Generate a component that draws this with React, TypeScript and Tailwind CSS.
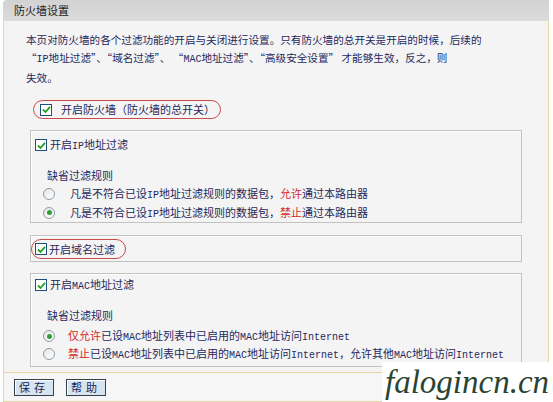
import React from 'react'

const cjk = "font-['Noto_Sans_CJK_SC',sans-serif]"

function Mono({ children }: { children: React.ReactNode }) {
  return <span className="font-['Liberation_Mono',monospace] text-[10px]">{children}</span>
}

function CheckBox() {
  return (
    <span className="flex h-[12px] w-[12px] shrink-0 items-center justify-center border border-[#1f4f7a] bg-white">
      <svg width="9" height="9" viewBox="0 0 9 9">
        <path d="M1 4.5 L3.5 7 L8 1.8" fill="none" stroke="#21a121" strokeWidth="1.8" />
      </svg>
    </span>
  )
}

function Radio({ checked }: { checked?: boolean }) {
  return (
    <span className="flex h-[12px] w-[12px] shrink-0 items-center justify-center rounded-full border border-[#8c9cab] bg-gradient-to-br from-[#e6e6e6] to-white">
      {checked && <span className="h-[5px] w-[5px] rounded-full bg-[#2f9e3a]" />}
    </span>
  )
}

function Red({ children }: { children: React.ReactNode }) {
  return <span className="text-[#d42a2a]">{children}</span>
}

export default function App() {
  return (
    <div className={`relative h-[402px] w-[553px] overflow-hidden bg-white text-[11px] text-[#26285c] ${cjk}`}>
      <div className="ml-[3px] w-[546px]">
        {/* title bar */}
        <div className="flex h-[21px] items-center rounded-tl-[4px] bg-gradient-to-b from-[#d2d2d2] to-[#dcdcdc] pl-[11px] text-[11px] text-[#1c1c1c]">
          防火墙设置
        </div>

        {/* content */}
        <div className="border-x border-b border-[#e4d6a4] bg-[#f4f4f4] pb-[5px]">
          <p className="pl-[22px] pt-[10px] text-[10.6px] leading-[18px]">
            本页对防火墙的各个过滤功能的开启与关闭进行设置。只有防火墙的总开关是开启的时候，后续的
            <br />
            “<Mono>IP</Mono>地址过滤”、“域名过滤”、 “<Mono>MAC</Mono>地址过滤”、“高级安全设置” 才能够生效，反之，则
            <br />
            失效。
          </p>

          {/* master switch */}
          <div className="ml-[29px] mt-[13px] flex h-[19px] w-[188px] items-center gap-[9px] rounded-full border border-[#c84a4a] pl-[6px]">
            <CheckBox />
            <span>开启防火墙（防火墙的总开关）</span>
          </div>

          {/* IP filter */}
          <div className="ml-[26px] mt-[11px] w-[492px] border border-[#c2c2c2] px-[4px] pt-[5px] shadow-[inset_1px_1px_0_#fff]">
            <div className="flex h-[18px] items-center gap-[3px]">
              <CheckBox />
              <span>开启<Mono>IP</Mono>地址过滤</span>
            </div>
            <div className="mt-[12px] flex h-[18px] items-center pl-[12px]">缺省过滤规则</div>
            <div className="flex h-[19px] items-center gap-[15px] pl-[8px]">
              <Radio />
              <span>凡是不符合已设<Mono>IP</Mono>地址过滤规则的数据包，<Red>允许</Red>通过本路由器</span>
            </div>
            <div className="flex h-[19px] items-center gap-[15px] pl-[8px]">
              <Radio checked />
              <span>凡是不符合已设<Mono>IP</Mono>地址过滤规则的数据包，<Red>禁止</Red>通过本路由器</span>
            </div>
          </div>

          {/* domain filter */}
          <div className="ml-[26px] mt-[12px] w-[492px] border border-[#c2c2c2] pb-[2px] pt-[3px] shadow-[inset_1px_1px_0_#fff]">
            <div className="flex h-[20px] w-[95px] items-center gap-[2px] rounded-full border border-[#c84a4a] pl-[3px]">
              <CheckBox />
              <span>开启域名过滤</span>
            </div>
          </div>

          {/* MAC filter */}
          <div className="ml-[26px] mt-[11px] w-[492px] border border-[#c2c2c2] px-[4px] pb-[3px] pt-[2px] shadow-[inset_1px_1px_0_#fff]">
            <div className="flex h-[18px] items-center gap-[3px]">
              <CheckBox />
              <span>开启<Mono>MAC</Mono>地址过滤</span>
            </div>
            <div className="mt-[12px] flex h-[18px] items-center pl-[12px]">缺省过滤规则</div>
            <div className="mt-[3px] flex h-[18px] items-center gap-[13px] pl-[8px]">
              <Radio checked />
              <span><Red>仅允许</Red>已设<Mono>MAC</Mono>地址列表中已启用的<Mono>MAC</Mono>地址访问<Mono>Internet</Mono></span>
            </div>
            <div className="flex h-[18px] items-center gap-[13px] pl-[8px]">
              <Radio />
              <span><Red>禁止</Red>已设<Mono>MAC</Mono>地址列表中已启用的<Mono>MAC</Mono>地址访问<Mono>Internet</Mono>，允许其他<Mono>MAC</Mono>地址访问<Mono>Internet</Mono></span>
            </div>
          </div>
        </div>

        {/* buttons */}
        <div className="flex h-[29px] gap-[12px] border-x border-b border-[#e4d6a4] bg-[#f6f6f6] pl-[10px] pt-[6px]">
          <button className="flex h-[17px] w-[40px] items-center justify-center border border-[#34404e] bg-[#d6e4ef] tracking-[4px] text-[#1c2456] shadow-[inset_1px_1px_0_#fff]">
            保存
          </button>
          <button className="flex h-[17px] w-[40px] items-center justify-center border border-[#34404e] bg-[#d6e4ef] tracking-[4px] text-[#1c2456] shadow-[inset_1px_1px_0_#fff]">
            帮助
          </button>
        </div>
      </div>

      {/* watermark */}
      <div className="absolute left-[382px] top-[362px] flex h-[40px] w-[171px] items-center bg-white pl-[3px]">
        <span className="font-['Liberation_Serif',serif] text-[33px] italic leading-none text-[#2a4431]">falogincn.cn</span>
      </div>
    </div>
  )
}
